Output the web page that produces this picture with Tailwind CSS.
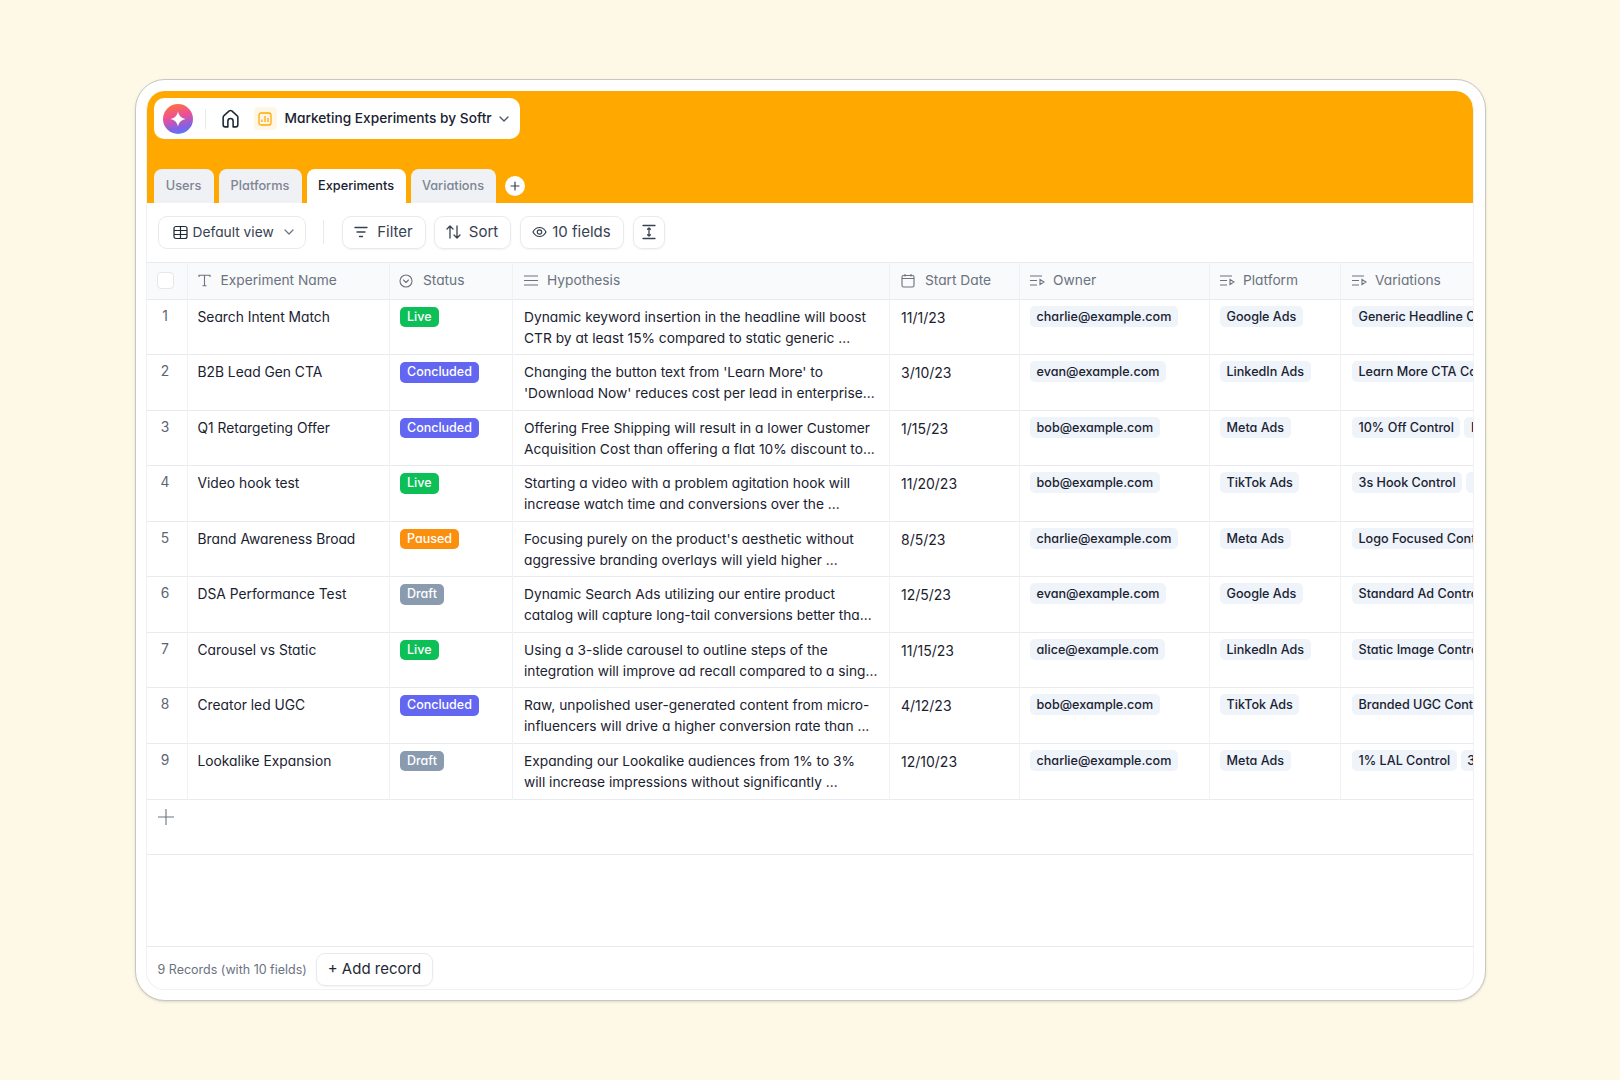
<!DOCTYPE html>
<html lang="en">
<head>
    <meta charset="UTF-8">
    <title>Marketing Experiments by Softr</title>
    <script src="https://cdn.jsdelivr.net/npm/@tailwindcss/browser@4"></script>
</head>
<body class="bg-[#fef8e6] font-['Inter',sans-serif] [font-feature-settings:'cv11'] text-[#1a2230]">
<div class="flex h-screen items-center justify-center">
    <!-- Card -->
    <div class="w-[1351px] h-[922px] bg-white border border-[#c8c8c2] rounded-[30px] pt-[11px] pb-[10px] pl-[10px] pr-[11px] shadow-sm">
        <div class="flex flex-col h-full border-x border-b border-[#f0f1f3] rounded-[18px] overflow-hidden">

            <!-- Orange header -->
            <div class="h-[112px] shrink-0 bg-[#ffa900] rounded-t-[18px] px-[7px] pt-[7px] flex flex-col">
                <div class="w-[366px] h-[41px] bg-white rounded-[10px] flex items-center pl-[9px]">
                    <div class="w-[30px] h-[30px] rounded-full bg-[linear-gradient(165deg,#ff7a2a_0%,#ee4f96_42%,#7d63e8_76%,#4f86f7_100%)] flex items-center justify-center">
                        <svg width="18" height="18" viewBox="0 0 18 18"><path d="M9 1.500 C9.900 5.800 12.200 8.100 16.500 9 C12.200 9.900 9.900 12.200 9 16.500 C8.100 12.200 5.800 9.900 1.500 9 C5.800 8.100 8.100 5.800 9 1.500Z" fill="#fff"/></svg>
                    </div>
                    <div class="w-px h-[20px] bg-[#e8eaee] ml-[12px] mr-[14px]"></div>
                    <svg width="21" height="21" viewBox="0 0 20 20" fill="none" stroke="#1f2937" stroke-width="1.500" stroke-linejoin="round" stroke-linecap="round"><path d="M7.500 18H5a2 2 0 0 1-2-2V8.800a2 2 0 0 1 .8-1.600l5-4.400a2 2 0 0 1 2.400 0l5 4.400a2 2 0 0 1 .8 1.600V16a2 2 0 0 1-2 2h-2.500v-5.500a2.500 2.500 0 0 0-5 0Z"/></svg>
                    <div class="w-[23px] h-[23px] ml-[13px] mr-[8px] bg-[#fff6e6] rounded-[4px] flex items-center justify-center">
                        <svg width="14" height="14" viewBox="0 0 14 14" fill="none" stroke="#ffa900" stroke-width="1.300"><rect x="1" y="1" width="12" height="12" rx="2"/><path d="M4 10V7.500M7 10V4M10 10V6"/></svg>
                    </div>
                    <span class="text-[13.700px] font-medium whitespace-nowrap">Marketing Experiments by Softr</span>
                    <svg class="ml-[6px]" width="12" height="12" viewBox="0 0 12 12" fill="none" stroke="#4b5563" stroke-width="1.300" stroke-linecap="round" stroke-linejoin="round"><path d="M2 4l4 4 4-4"/></svg>
                </div>
                <!-- Tabs -->
                <div class="mt-auto flex items-center gap-[5px] h-[34px] text-[12.750px] font-medium text-[#7d8594]">
                    <div class="h-full w-[60px] bg-[#eff1f4] rounded-t-[8px] flex items-center justify-center">Users</div>
                    <div class="h-full w-[83px] bg-[#eff1f4] rounded-t-[8px] flex items-center justify-center">Platforms</div>
                    <div class="h-full w-[99px] bg-white text-[#1a2230] rounded-t-[8px] flex items-center justify-center">Experiments</div>
                    <div class="h-full w-[85px] bg-[#eff1f4] rounded-t-[8px] flex items-center justify-center">Variations</div>
                    <div class="ml-[4px] w-[20px] h-[20px] rounded-full bg-white flex items-center justify-center">
                        <svg width="10" height="10" viewBox="0 0 10 10" stroke="#374151" stroke-width="1.200" stroke-linecap="round"><path d="M5 1v8M1 5h8"/></svg>
                    </div>
                </div>
            </div>

            <!-- Toolbar -->
            <div class="h-[59px] shrink-0 flex items-center pl-[11px] pb-[1px] text-[#374151]">
                <div class="h-[33px] w-[148px] border border-[#e8eaee] rounded-[9px] flex items-center pl-[14px] gap-[5px] text-[13.750px]">
                    <svg width="15" height="15" viewBox="0 0 15 15" fill="none" stroke="#1f2937" stroke-width="1.200"><rect x="1" y="1.500" width="13" height="12" rx="2"/><path d="M1 5.500h13M1 9.500h13M7.500 1.500v12"/></svg>
                    <span>Default view</span>
                    <svg class="ml-[4px]" width="12" height="12" viewBox="0 0 12 12" fill="none" stroke="#6b7280" stroke-width="1.200" stroke-linecap="round" stroke-linejoin="round"><path d="M2 4l4 4 4-4"/></svg>
                </div>
                <div class="w-px h-[24px] bg-[#e8eaee] ml-[17px] mr-[18px]"></div>
                <div class="h-[33px] w-[84px] border border-[#e8eaee] rounded-[9px] shadow-xs flex items-center justify-center gap-[9px] text-[15px]">
                    <svg width="14" height="12" viewBox="0 0 14 12" fill="none" stroke="#374151" stroke-width="1.300" stroke-linecap="round"><path d="M1 1.500h12M3 6h8M5.500 10.500h3"/></svg>
                    <span>Filter</span>
                </div>
                <div class="h-[33px] w-[77px] ml-[8px] border border-[#e8eaee] rounded-[9px] shadow-xs flex items-center justify-center gap-[8px] text-[15px]">
                    <svg width="15" height="14" viewBox="0 0 15 14" fill="none" stroke="#374151" stroke-width="1.300" stroke-linecap="round" stroke-linejoin="round"><path d="M4 13V1M1 4l3-3 3 3M11 1v12M8 10l3 3 3-3"/></svg>
                    <span>Sort</span>
                </div>
                <div class="h-[33px] w-[104px] ml-[9px] border border-[#e8eaee] rounded-[9px] shadow-xs flex items-center justify-center gap-[5px] text-[15px]">
                    <svg width="15" height="12" viewBox="0 0 15 12" fill="none" stroke="#374151" stroke-width="1.200"><path d="M1 6c1.500-3 3.700-4.500 6.500-4.500S12.500 3 14 6c-1.500 3-3.700 4.500-6.500 4.500S2.500 9 1 6Z"/><circle cx="7.500" cy="6" r="2.200"/></svg>
                    <span>10 fields</span>
                </div>
                <div class="h-[33px] w-[32px] ml-[9px] border border-[#e8eaee] rounded-[9px] shadow-xs flex items-center justify-center">
                    <svg width="14" height="16" viewBox="0 0 14 16" fill="none" stroke="#374151" stroke-width="1.300" stroke-linecap="round" stroke-linejoin="round"><path d="M1 1.500h12M1 14.500h12M7 4v8M5.500 5.200 7 4l1.500 1.200M5.500 10.800 7 12l1.500-1.200"/></svg>
                </div>
            </div>

            <!-- Table -->
            <div class="overflow-hidden shrink-0">
                <table class="table-fixed border-collapse w-[1400px] text-[13.800px] [&_td]:align-top [&_td]:border-r [&_td]:border-[#f0f1f4] [&_tbody_tr]:h-[55.550px] [&_tbody_tr]:border-b [&_tbody_tr]:border-[#e8eaee]">
                    <colgroup>
                        <col class="w-[40.500px]">
                        <col class="w-[202.500px]">
                        <col class="w-[123px]">
                        <col class="w-[377px]">
                        <col class="w-[130px]">
                        <col class="w-[190px]">
                        <col class="w-[131px]">
                        <col class="w-[206px]">
                    </colgroup>
                    <thead>
                        <tr class="h-[36.600px] bg-[#f9fafb] border-y border-[#e8eaee] text-[13.750px] text-[#6b7280] [&_th]:border-r [&_th]:border-[#f0f1f4] [&_th]:font-normal [&_th]:text-left">
                            <th class="pr-[3px]"><div class="w-[17px] h-[17px] mx-auto bg-white border border-[#e5e7eb] rounded-[4px]"></div></th>
                            <th class="pl-[10px]"><div class="flex items-center gap-[10px]">
                                <svg width="13" height="13" viewBox="0 0 13 13" fill="none" stroke="#6b7280" stroke-width="1.100"><path d="M1 3V1.200h11V3M6.500 1.200v10.500M4.500 11.800h4"/></svg>
                                <span>Experiment Name</span></div></th>
                            <th class="pl-[9px]"><div class="flex items-center gap-[10px]">
                                <svg width="14" height="14" viewBox="0 0 14 14" fill="none" stroke="#6b7280" stroke-width="1.100" stroke-linecap="round" stroke-linejoin="round"><circle cx="7" cy="7" r="6"/><path d="M4.500 6 7 8.500 9.500 6"/></svg>
                                <span>Status</span></div></th>
                            <th class="pl-[11px]"><div class="flex items-center gap-[9px]">
                                <svg width="14" height="11" viewBox="0 0 14 11" stroke="#6b7280" stroke-width="1.100"><path d="M0 1h14M0 5.500h14M0 10h14"/></svg>
                                <span>Hypothesis</span></div></th>
                            <th class="pl-[11px]"><div class="flex items-center gap-[10px]">
                                <svg width="14" height="15" viewBox="0 0 14 15" fill="none" stroke="#6b7280" stroke-width="1.100"><rect x="1" y="2.500" width="12" height="11.500" rx="1.500"/><path d="M1 5.500h12M4 1v2.500M10 1v2.500"/></svg>
                                <span>Start Date</span></div></th>
                            <th class="pl-[10px]"><div class="flex items-center gap-[8px]">
                                <svg width="15" height="11" viewBox="0 0 15 11" fill="none" stroke="#6b7280" stroke-width="1.100"><path d="M0 1h12M0 5.500h7M0 10h7M10 4.500v5l4-2.500Z"/></svg>
                                <span>Owner</span></div></th>
                            <th class="pl-[10px]"><div class="flex items-center gap-[8px]">
                                <svg width="15" height="11" viewBox="0 0 15 11" fill="none" stroke="#6b7280" stroke-width="1.100"><path d="M0 1h12M0 5.500h7M0 10h7M10 4.500v5l4-2.500Z"/></svg>
                                <span>Platform</span></div></th>
                            <th class="pl-[11px]"><div class="flex items-center gap-[8px]">
                                <svg width="15" height="11" viewBox="0 0 15 11" fill="none" stroke="#6b7280" stroke-width="1.100"><path d="M0 1h12M0 5.500h7M0 10h7M10 4.500v5l4-2.500Z"/></svg>
                                <span>Variations</span></div></th>
                        </tr>
                    </thead>
                    <tbody class="[&_td:nth-child(1)]:text-center [&_td:nth-child(1)]:text-[#5b6472] [&_td:nth-child(1)]:pt-[6px] [&_td:nth-child(1)]:pr-[3px] [&_td:nth-child(2)]:pl-[10px] [&_td:nth-child(2)]:pt-[7px] [&_td:nth-child(3)]:pl-[10px] [&_td:nth-child(3)]:pt-[7px] [&_td:nth-child(4)]:pl-[11px] [&_td:nth-child(4)]:pt-[7px] [&_td:nth-child(4)]:text-[13.750px] [&_td:nth-child(4)]:leading-[21px] [&_td:nth-child(4)]:whitespace-nowrap [&_td:nth-child(5)]:pl-[11px] [&_td:nth-child(5)]:pt-[7px] [&_td:nth-child(5)]:text-[14px] [&_td:nth-child(n+6)]:pt-[6px] [&_td:nth-child(6)]:pl-[10px] [&_td:nth-child(7)]:pl-[10px] [&_td:nth-child(8)]:pl-[11px] [&_td:nth-child(8)]:border-r-0">
                        <tr>
                            <td>1</td><td>Search Intent Match</td>
                            <td><span class="inline-block align-top h-[20.500px] leading-[20.500px] px-[7px] rounded-[5px] bg-[#0cbf57] text-white text-[12.500px] font-medium">Live</span></td>
                            <td>Dynamic keyword insertion in the headline will boost<br>CTR by at least 15% compared to static generic ...</td>
                            <td>11/1/23</td>
                            <td><span class="inline-block align-top h-[21px] leading-[21px] px-[6.500px] rounded-[5px] bg-[#eff3fa] text-[12.600px] font-medium">charlie@example.com</span></td>
                            <td><span class="inline-block align-top h-[21px] leading-[21px] px-[6.500px] rounded-[5px] bg-[#eff3fa] text-[12.600px] font-medium">Google Ads</span></td>
                            <td><div class="flex gap-[4px] whitespace-nowrap"><span class="h-[21px] leading-[21px] px-[6.500px] rounded-[5px] bg-[#eff3fa] text-[12.600px] font-medium">Generic Headline Control</span></div></td>
                        </tr>
                        <tr>
                            <td>2</td><td>B2B Lead Gen CTA</td>
                            <td><span class="inline-block align-top h-[20.500px] leading-[20.500px] px-[7px] rounded-[5px] bg-[#6366f1] text-white text-[12.500px] font-medium">Concluded</span></td>
                            <td>Changing the button text from 'Learn More' to<br>'Download Now' reduces cost per lead in enterprise...</td>
                            <td>3/10/23</td>
                            <td><span class="inline-block align-top h-[21px] leading-[21px] px-[6.500px] rounded-[5px] bg-[#eff3fa] text-[12.600px] font-medium">evan@example.com</span></td>
                            <td><span class="inline-block align-top h-[21px] leading-[21px] px-[6.500px] rounded-[5px] bg-[#eff3fa] text-[12.600px] font-medium">LinkedIn Ads</span></td>
                            <td><div class="flex gap-[4px] whitespace-nowrap"><span class="h-[21px] leading-[21px] px-[6.500px] rounded-[5px] bg-[#eff3fa] text-[12.600px] font-medium">Learn More CTA Control</span></div></td>
                        </tr>
                        <tr>
                            <td>3</td><td>Q1 Retargeting Offer</td>
                            <td><span class="inline-block align-top h-[20.500px] leading-[20.500px] px-[7px] rounded-[5px] bg-[#6366f1] text-white text-[12.500px] font-medium">Concluded</span></td>
                            <td>Offering Free Shipping will result in a lower Customer<br>Acquisition Cost than offering a flat 10% discount to...</td>
                            <td>1/15/23</td>
                            <td><span class="inline-block align-top h-[21px] leading-[21px] px-[6.500px] rounded-[5px] bg-[#eff3fa] text-[12.600px] font-medium">bob@example.com</span></td>
                            <td><span class="inline-block align-top h-[21px] leading-[21px] px-[6.500px] rounded-[5px] bg-[#eff3fa] text-[12.600px] font-medium">Meta Ads</span></td>
                            <td><div class="flex gap-[4px] whitespace-nowrap"><span class="h-[21px] leading-[21px] px-[6.500px] rounded-[5px] bg-[#eff3fa] text-[12.600px] font-medium">10% Off Control</span><span class="h-[21px] leading-[21px] px-[6.500px] rounded-[5px] bg-[#eff3fa] text-[12.600px] font-medium">Free Shipping</span></div></td>
                        </tr>
                        <tr>
                            <td>4</td><td>Video hook test</td>
                            <td><span class="inline-block align-top h-[20.500px] leading-[20.500px] px-[7px] rounded-[5px] bg-[#0cbf57] text-white text-[12.500px] font-medium">Live</span></td>
                            <td>Starting a video with a problem agitation hook will<br>increase watch time and conversions over the ...</td>
                            <td>11/20/23</td>
                            <td><span class="inline-block align-top h-[21px] leading-[21px] px-[6.500px] rounded-[5px] bg-[#eff3fa] text-[12.600px] font-medium">bob@example.com</span></td>
                            <td><span class="inline-block align-top h-[21px] leading-[21px] px-[6.500px] rounded-[5px] bg-[#eff3fa] text-[12.600px] font-medium">TikTok Ads</span></td>
                            <td><div class="flex gap-[4px] whitespace-nowrap"><span class="h-[21px] leading-[21px] px-[6.500px] rounded-[5px] bg-[#eff3fa] text-[12.600px] font-medium">3s Hook Control</span><span class="h-[21px] leading-[21px] px-[6.500px] rounded-[5px] bg-[#eff3fa] text-[12.600px] font-medium">Problem Hook</span></div></td>
                        </tr>
                        <tr>
                            <td>5</td><td>Brand Awareness Broad</td>
                            <td><span class="inline-block align-top h-[20.500px] leading-[20.500px] px-[7px] rounded-[5px] bg-[#fb8f0e] text-white text-[12.500px] font-medium">Paused</span></td>
                            <td>Focusing purely on the product's aesthetic without<br>aggressive branding overlays will yield higher ...</td>
                            <td>8/5/23</td>
                            <td><span class="inline-block align-top h-[21px] leading-[21px] px-[6.500px] rounded-[5px] bg-[#eff3fa] text-[12.600px] font-medium">charlie@example.com</span></td>
                            <td><span class="inline-block align-top h-[21px] leading-[21px] px-[6.500px] rounded-[5px] bg-[#eff3fa] text-[12.600px] font-medium">Meta Ads</span></td>
                            <td><div class="flex gap-[4px] whitespace-nowrap"><span class="h-[21px] leading-[21px] px-[6.500px] rounded-[5px] bg-[#eff3fa] text-[12.600px] font-medium">Logo Focused Control</span></div></td>
                        </tr>
                        <tr>
                            <td>6</td><td>DSA Performance Test</td>
                            <td><span class="inline-block align-top h-[20.500px] leading-[20.500px] px-[7px] rounded-[5px] bg-[#8a9bb0] text-white text-[12.500px] font-medium">Draft</span></td>
                            <td>Dynamic Search Ads utilizing our entire product<br>catalog will capture long-tail conversions better tha...</td>
                            <td>12/5/23</td>
                            <td><span class="inline-block align-top h-[21px] leading-[21px] px-[6.500px] rounded-[5px] bg-[#eff3fa] text-[12.600px] font-medium">evan@example.com</span></td>
                            <td><span class="inline-block align-top h-[21px] leading-[21px] px-[6.500px] rounded-[5px] bg-[#eff3fa] text-[12.600px] font-medium">Google Ads</span></td>
                            <td><div class="flex gap-[4px] whitespace-nowrap"><span class="h-[21px] leading-[21px] px-[6.500px] rounded-[5px] bg-[#eff3fa] text-[12.600px] font-medium">Standard Ad Control</span></div></td>
                        </tr>
                        <tr>
                            <td>7</td><td>Carousel vs Static</td>
                            <td><span class="inline-block align-top h-[20.500px] leading-[20.500px] px-[7px] rounded-[5px] bg-[#0cbf57] text-white text-[12.500px] font-medium">Live</span></td>
                            <td>Using a 3-slide carousel to outline steps of the<br>integration will improve ad recall compared to a sing...</td>
                            <td>11/15/23</td>
                            <td><span class="inline-block align-top h-[21px] leading-[21px] px-[6.500px] rounded-[5px] bg-[#eff3fa] text-[12.600px] font-medium">alice@example.com</span></td>
                            <td><span class="inline-block align-top h-[21px] leading-[21px] px-[6.500px] rounded-[5px] bg-[#eff3fa] text-[12.600px] font-medium">LinkedIn Ads</span></td>
                            <td><div class="flex gap-[4px] whitespace-nowrap"><span class="h-[21px] leading-[21px] px-[6.500px] rounded-[5px] bg-[#eff3fa] text-[12.600px] font-medium">Static Image Control</span></div></td>
                        </tr>
                        <tr>
                            <td>8</td><td>Creator led UGC</td>
                            <td><span class="inline-block align-top h-[20.500px] leading-[20.500px] px-[7px] rounded-[5px] bg-[#6366f1] text-white text-[12.500px] font-medium">Concluded</span></td>
                            <td>Raw, unpolished user-generated content from micro-<br>influencers will drive a higher conversion rate than ...</td>
                            <td>4/12/23</td>
                            <td><span class="inline-block align-top h-[21px] leading-[21px] px-[6.500px] rounded-[5px] bg-[#eff3fa] text-[12.600px] font-medium">bob@example.com</span></td>
                            <td><span class="inline-block align-top h-[21px] leading-[21px] px-[6.500px] rounded-[5px] bg-[#eff3fa] text-[12.600px] font-medium">TikTok Ads</span></td>
                            <td><div class="flex gap-[4px] whitespace-nowrap"><span class="h-[21px] leading-[21px] px-[6.500px] rounded-[5px] bg-[#eff3fa] text-[12.600px] font-medium">Branded UGC Control</span></div></td>
                        </tr>
                        <tr>
                            <td>9</td><td>Lookalike Expansion</td>
                            <td><span class="inline-block align-top h-[20.500px] leading-[20.500px] px-[7px] rounded-[5px] bg-[#8a9bb0] text-white text-[12.500px] font-medium">Draft</span></td>
                            <td>Expanding our Lookalike audiences from 1% to 3%<br>will increase impressions without significantly ...</td>
                            <td>12/10/23</td>
                            <td><span class="inline-block align-top h-[21px] leading-[21px] px-[6.500px] rounded-[5px] bg-[#eff3fa] text-[12.600px] font-medium">charlie@example.com</span></td>
                            <td><span class="inline-block align-top h-[21px] leading-[21px] px-[6.500px] rounded-[5px] bg-[#eff3fa] text-[12.600px] font-medium">Meta Ads</span></td>
                            <td><div class="flex gap-[4px] whitespace-nowrap"><span class="h-[21px] leading-[21px] px-[6.500px] rounded-[5px] bg-[#eff3fa] text-[12.600px] font-medium">1% LAL Control</span><span class="h-[21px] leading-[21px] px-[6.500px] rounded-[5px] bg-[#eff3fa] text-[12.600px] font-medium">3% LAL Test</span></div></td>
                        </tr>
                    </tbody>
                </table>
            </div>

            <!-- Add row -->
            <div class="h-[55px] shrink-0 border-b border-[#e8eaee] pl-[11px] pt-[9px]">
                <svg width="16" height="16" viewBox="0 0 16 16" stroke="#6b7280" stroke-width="1.100"><path d="M8 0v16M0 8h16"/></svg>
            </div>
            <div class="flex-1"></div>

            <!-- Footer -->
            <div class="h-[43px] shrink-0 border-t border-[#e8eaee] flex items-center pl-[11px] pt-[3px] gap-[9px]">
                <span class="text-[12.500px] text-[#6b7280] translate-y-[1px]">9 Records (with 10 fields)</span>
                <div class="h-[33px] w-[117px] border border-[#e8eaee] rounded-[9px] shadow-xs flex items-center justify-center text-[15px] text-[#1f2937]">+ Add record</div>
            </div>
        </div>
    </div>
</div>
</body>
</html>
